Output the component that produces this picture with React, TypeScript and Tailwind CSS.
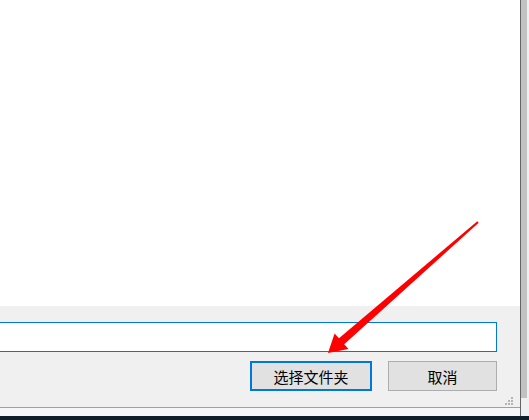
import React from "react";

// Resize grip in the dialog corner
function Grip() {
  const dots = [
    [6, 0],
    [3, 3],
    [6, 3],
    [0, 6],
    [3, 6],
    [6, 6],
  ];
  return (
    <svg width="9" height="9" viewBox="0 0 9 9" className="absolute right-[6px] bottom-[1px]">
      {dots.map(([x, y], i) => (
        <rect key={i} x={x} y={y} width="2" height="2" fill="#b4b4b4" />
      ))}
    </svg>
  );
}

// Red annotation arrow drawn over the dialog
function RedArrow() {
  return (
    <svg
      width="529"
      height="420"
      viewBox="0 0 529 420"
      className="pointer-events-none absolute left-0 top-0"
    >
      <polygon
        points="478.7,222.8 344.2,344.2 348.5,349 328,353 334.6,333.4 339,338.2 477.3,221.2"
        fill="#ff0000"
      />
    </svg>
  );
}

export default function App() {
  return (
    <div
      className="relative flex h-[420px] w-[529px] flex-col overflow-hidden bg-white text-black"
      style={{ fontFamily: '"Noto Sans CJK SC", "Noto Sans", sans-serif' }}
    >
      <div className="flex h-[416px]">
        {/* Dialog body */}
        <div className="flex w-[520px] flex-col">
          <div className="h-[306px] bg-white" />
          <div className="relative flex h-[102px] flex-col border-b border-[#a0a0a0] bg-[#f0f0f0] pr-[23px] pt-[16px]">
            <div className="h-[30px] w-[497px] border border-l-0 border-[#0078d7] bg-white" />
            <div className="mt-[9px] flex justify-end gap-[16px]">
              <button className="flex h-[30px] w-[122px] items-center justify-center border-2 border-[#0078d7] bg-[#e1e1e1] text-[15px] leading-none">
                选择文件夹
              </button>
              <button className="flex h-[30px] w-[109px] items-center justify-center border border-[#adadad] bg-[#e1e1e1] text-[15px] leading-none">
                取消
              </button>
            </div>
            <Grip />
          </div>
          <div className="flex-1 bg-[#f5f6f7]" />
        </div>
        {/* Window edge / scrollbar strip */}
        <div className="w-px bg-[#646464]" />
        <div className="flex w-[6px] flex-col">
          <div className="h-[398px] bg-[#c2c2c2]" />
          <div className="flex-1 bg-[#f0f0f0]" />
        </div>
        <div className="w-[2px] bg-[#f0f0f0]" />
      </div>
      <div className="flex-1 bg-[#0f1e28]" />
      <RedArrow />
    </div>
  );
}
